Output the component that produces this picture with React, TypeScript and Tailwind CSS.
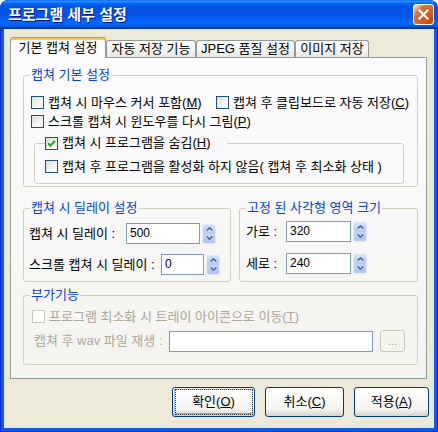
import React from "react";

const Box = ({ checked = false, disabled = false }: { checked?: boolean; disabled?: boolean }) => (
  <span
    className={`flex h-[13px] w-[13px] shrink-0 items-center justify-center border ${
      disabled
        ? "border-[#CAC8BB] bg-white"
        : "border-[#1C5180] bg-[linear-gradient(135deg,#DCDCD7,#F5F5F1_60%,#FFFFFF)]"
    }`}
  >
    {checked && (
      <svg width="9" height="9" viewBox="0 0 9 9">
        <path d="M1 4.2 L3.4 6.6 L8 1.8" stroke="#21A121" strokeWidth="2" fill="none" />
      </svg>
    )}
  </span>
);

const Spin = () => (
  <div className="ml-[2px] flex h-[20px] w-[14px] shrink-0 flex-col overflow-hidden rounded-[2px] border border-[#E3EAFB]">
    <div className="flex flex-1 items-center justify-center bg-[linear-gradient(to_bottom,#D3DFFB,#B8CAF5)]">
      <svg width="7" height="4" viewBox="0 0 7 4">
        <path d="M0.7 3.5 L3.5 0.8 L6.3 3.5" stroke="#4D6185" strokeWidth="1.4" fill="none" />
      </svg>
    </div>
    <div className="flex flex-1 items-center justify-center bg-[linear-gradient(to_bottom,#C6D5F9,#AFC3F2)]">
      <svg width="7" height="4" viewBox="0 0 7 4">
        <path d="M0.7 0.5 L3.5 3.2 L6.3 0.5" stroke="#4D6185" strokeWidth="1.4" fill="none" />
      </svg>
    </div>
  </div>
);

const Field = ({ w, value = "" }: { w: string; value?: string }) => (
  <div className={`${w} h-[21px] shrink-0 border border-[#7F9DB9] bg-white pl-[3px] text-[12px] leading-[19px]`}>
    {value}
  </div>
);

const Btn = ({ w, children, focus = false }: { w: string; children: React.ReactNode; focus?: boolean }) => (
  <div
    className={`${w} h-[30px] rounded-[3px] border border-[#003C74] bg-[linear-gradient(to_bottom,#FFFFFF,#F4F4F0_75%,#D8D2C6)] p-[1px]`}
  >
    <div
      className={`flex h-full w-full items-center justify-center rounded-[2px] text-[13px] ${
        focus ? "shadow-[inset_0_0_0_1px_#A9C4EE,inset_0_-1px_0_1px_#7DA2E4]" : ""
      }`}
    >
      {focus ? (
        <div className="flex h-[26px] w-[78px] items-center justify-center border border-dotted border-[#3a3a3a]">
          {children}
        </div>
      ) : (
        children
      )}
    </div>
  </div>
);

const Legend = ({ children, className = "" }: { children: React.ReactNode; className?: string }) => (
  <legend className={`px-[1px] text-[13px] leading-[14px] text-[#0046D5] ${className}`}>{children}</legend>
);

const App: React.FC = () => {
  return (
    <div className="flex h-[432px] w-[438px] flex-col overflow-hidden rounded-t-[8px] bg-[#0A24C8] font-['Liberation_Sans','Noto_Sans_CJK_KR',sans-serif] text-black">
      {/* title bar */}
      <div className="flex h-[29px] shrink-0 items-center justify-between rounded-t-[8px] bg-[linear-gradient(to_bottom,#0058EE_0%,#3593FF_4%,#288EFF_6%,#127DFF_8%,#036FFC_10%,#0262EE_14%,#0057E5_20%,#0054E3_24%,#0055EB_56%,#005BF5_66%,#026AFE_76%,#0062EF_86%,#0052D6_92%,#0040AB_94%,#003092_100%)] pl-[8px] pr-[4px]">
        <span className="text-[15px] font-bold leading-[16px] text-white [text-shadow:1px_1px_#0F1089]">
          프로그램 세부 설정
        </span>
        <div className="flex h-[21px] w-[21px] items-center justify-center rounded-[3px] border border-white bg-[radial-gradient(circle_at_90%_90%,#CC4600_0%,#DC6527_55%,#CD7546_70%,#FFCCB2_90%,#FFFFFF_100%)]">
          <svg width="11" height="11" viewBox="0 0 11 11">
            <path d="M1.5 1.5 L9.5 9.5 M9.5 1.5 L1.5 9.5" stroke="#FFFFFF" strokeWidth="2.2" strokeLinecap="square" />
          </svg>
        </div>
      </div>

      {/* body */}
      <div className="mx-px mb-px flex-1 border-x-[3px] border-b-[3px] border-[#0B5CE6]">
        <div className="flex h-full flex-col bg-[#ECE9D8] pl-[6px] pt-[8px]">
          {/* tabs */}
          <div className="flex h-[20px] items-end text-[13px]">
            <div className="relative z-10 -mb-px flex h-[21px] w-[96px] items-center justify-center rounded-t-[3px] border-x border-t border-x-[#919B9C] border-t-[#E68B2C] bg-[#FCFCFE] pb-[1px] shadow-[inset_0_2px_#FFC83C]">
              기본 캡쳐 설정
            </div>
            <div className="flex h-[17px] w-[90px] items-center justify-center rounded-t-[3px] border-x border-t border-[#919B9C] bg-[linear-gradient(to_bottom,#FFFFFF,#F3F3EF_60%,#E8E7E0)]">
              자동 저장 기능
            </div>
            <div className="flex h-[17px] w-[99px] items-center justify-center rounded-t-[3px] border-x border-t border-[#919B9C] bg-[linear-gradient(to_bottom,#FFFFFF,#F3F3EF_60%,#E8E7E0)]">
              JPEG 품질 설정
            </div>
            <div className="flex h-[17px] w-[74px] items-center justify-center rounded-t-[3px] border-x border-t border-[#919B9C] bg-[linear-gradient(to_bottom,#FFFFFF,#F3F3EF_60%,#E8E7E0)]">
              이미지 저장
            </div>
          </div>

          {/* tab pane */}
          <div className="flex h-[322px] w-[417px] flex-col border border-[#919B9C] bg-[linear-gradient(to_bottom,#FCFCFE,#F4F3EE)] pl-[12px] text-[13px]">
            {/* 캡쳐 기본 설정 */}
            <fieldset className="mt-[10px] h-[119px] w-[395px] rounded-[3px] border border-[#D0D0BF]">
              <Legend className="ml-[6px]">캡쳐 기본 설정</Legend>
              <div className="pl-[7px] pt-[11px]">
                <div className="flex h-[19px] items-center whitespace-nowrap">
                  <label className="flex w-[185px] items-center gap-[4px]">
                    <Box />
                    <span>
                      캡쳐 시 마우스 커서 포함(<u>M</u>)
                    </span>
                  </label>
                  <label className="flex items-center gap-[4px]">
                    <Box />
                    <span>
                      캡쳐 후 클립보드로 자동 저장(<u>C</u>)
                    </span>
                  </label>
                </div>
                <div className="flex h-[19px] items-center gap-[4px]">
                  <Box />
                  <span>
                    스크롤 캡쳐 시 윈도우를 다시 그림(<u>P</u>)
                  </span>
                </div>
                <fieldset className="ml-[3px] mt-[5px] h-[48px] w-[370px] rounded-[3px] border border-[#D0D0BF]">
                  <legend className="ml-[10px] pr-[16px] text-[13px] leading-[14px]">
                    <span className="flex items-center gap-[4px]">
                      <Box checked />
                      <span>
                        캡쳐 시 프로그램을 숨김(<u>H</u>)
                      </span>
                    </span>
                  </legend>
                  <div className="mt-[7px] flex h-[19px] items-center gap-[4px] whitespace-nowrap pl-[10px]">
                    <Box />
                    <span>캡쳐 후 프로그램을 활성화 하지 않음( 캡쳐 후 최소화 상태 )</span>
                  </div>
                </fieldset>
              </div>
            </fieldset>

            {/* delay + fixed size */}
            <div className="mt-[14px] flex gap-[8px]">
              <fieldset className="h-[81px] w-[208px] rounded-[3px] border border-[#D0D0BF]">
                <Legend className="ml-[6px]">캡쳐 시 딜레이 설정</Legend>
                <div className="flex flex-col gap-[10px] whitespace-nowrap pl-[5px] pt-[8px]">
                  <div className="flex items-center">
                    <span className="w-[97px] shrink-0">캡쳐 시 딜레이 :</span>
                    <Field w="w-[74px]" value="500" />
                    <Spin />
                  </div>
                  <div className="flex items-center">
                    <span className="w-[132px] shrink-0">스크롤 캡쳐 시 딜레이 :</span>
                    <Field w="w-[43px]" value="0" />
                    <Spin />
                  </div>
                </div>
              </fieldset>
              <fieldset className="h-[81px] w-[179px] rounded-[3px] border border-[#D0D0BF]">
                <Legend className="ml-[6px]">고정 된 사각형 영역 크기</Legend>
                <div className="flex flex-col gap-[11px] whitespace-nowrap pl-[6px] pt-[6px]">
                  <div className="flex items-center">
                    <span className="w-[40px] shrink-0">가로 :</span>
                    <Field w="w-[65px]" value="320" />
                    <Spin />
                  </div>
                  <div className="flex items-center">
                    <span className="w-[40px] shrink-0">세로 :</span>
                    <Field w="w-[65px]" value="240" />
                    <Spin />
                  </div>
                </div>
              </fieldset>
            </div>

            {/* 부가기능 */}
            <fieldset className="mt-[6px] h-[77px] w-[395px] rounded-[3px] border border-[#D0D0BF]">
              <Legend className="ml-[6px]">부가기능</Legend>
              <div className="whitespace-nowrap pl-[8px] pt-[5px] text-[#ACA899]">
                <div className="flex h-[19px] items-center gap-[4px]">
                  <Box disabled />
                  <span>
                    프로그램 최소화 시 트레이 아이콘으로 이동(<u>T</u>)
                  </span>
                </div>
                <div className="ml-[2px] mt-[4px] flex items-center">
                  <span className="w-[135px] shrink-0">캡쳐 후 wav 파일 재생 :</span>
                  <Field w="w-[204px]" />
                  <div className="ml-[7px] flex h-[22px] w-[25px] items-center justify-center rounded-[3px] border border-[#C9C7BA] bg-[#F5F4EA] text-[11px] leading-[14px]">
                    ...
                  </div>
                </div>
              </div>
            </fieldset>
          </div>

          {/* dialog buttons */}
          <div className="mt-[8px] flex justify-end gap-[10px] pr-[5px]">
            <Btn w="w-[83px]" focus>
              확인(<u>O</u>)
            </Btn>
            <Btn w="w-[79px]">
              취소(<u>C</u>)
            </Btn>
            <Btn w="w-[75px]">
              적용(<u>A</u>)
            </Btn>
          </div>
        </div>
      </div>
    </div>
  );
};

export default App;
